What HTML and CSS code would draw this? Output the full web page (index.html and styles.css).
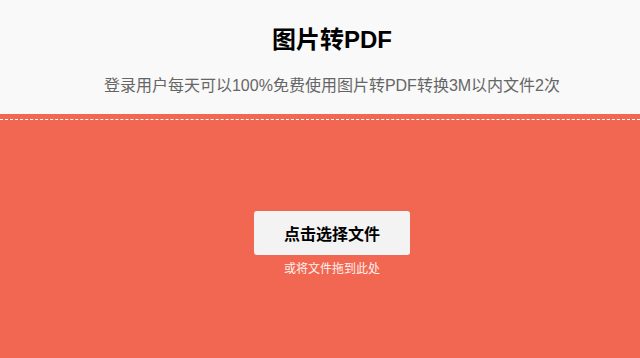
FILE: index.html
```html
<!DOCTYPE html>
<html lang="zh-CN">
<head>
  <meta charset="UTF-8">
  <title>图片转PDF</title>
  <link rel="stylesheet" href="styles.css">
</head>
<body>
  <div class="header">
    <h1 class="title">图片转PDF</h1>
    <p class="subtitle">登录用户每天可以100%免费使用图片转PDF转换3M以内文件2次</p>
  </div>
  <div class="upload">
    <div class="drop-zone">
      <button class="pick-btn" type="button">点击选择文件</button>
      <p class="drop-tip">或将文件拖到此处</p>
    </div>
  </div>
</body>
</html>
```

FILE: styles.css
```css
html, body {
  height: 100%;
}

body {
  margin: 0;
  font-family: Arial, "Liberation Sans", "Noto Sans CJK SC", sans-serif;
  background-color: #f26751;
  display: flex;
  flex-direction: column;
}

.header {
  background-color: #f9f9f9;
  height: 114px;
  box-sizing: border-box;
  padding: 26px 0 0 24px;
  text-align: center;
}

.title {
  margin: 0;
  font-size: 24px;
  line-height: 28px;
  font-weight: bold;
  color: #000;
}

.subtitle {
  margin: 22px 0 0;
  font-size: 16px;
  line-height: 20px;
  color: #666;
}

.upload {
  flex: 1;
  padding-top: 5px;
}

.drop-zone {
  border-top: 1px dashed #fff;
  text-align: center;
  padding: 91px 0 0 24px;
}

.pick-btn {
  width: 156px;
  height: 44px;
  background-color: #f3f3f3;
  border: none;
  border-radius: 3px;
  font-family: inherit;
  font-size: 16px;
  font-weight: bold;
  color: #000;
  cursor: pointer;
}

.drop-tip {
  margin: 6px 0 0;
  font-size: 12px;
  line-height: 16px;
  color: #fff3f0;
}
```
